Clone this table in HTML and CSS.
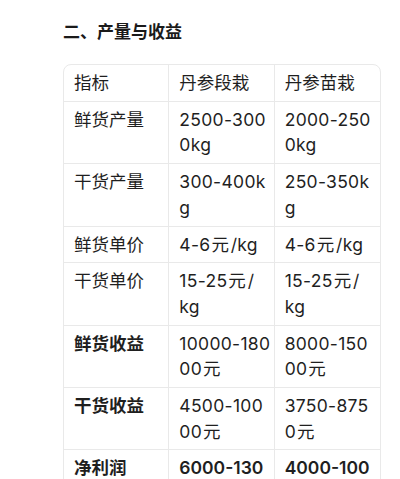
FILE: index.html
```html
<!DOCTYPE html>
<html lang="zh-CN">
<head>
<meta charset="utf-8">
<title>产量与收益</title>
<link rel="stylesheet" href="styles.css">
</head>
<body>
<section class="doc">
  <h2 class="title">二、产量与收益</h2>
  <table class="grid">
    <colgroup><col><col><col></colgroup>
    <thead>
      <tr><th>指标</th><th>丹参段栽</th><th>丹参苗栽</th></tr>
    </thead>
    <tbody>
      <tr><td>鲜货产量</td><td>2500-300<br>0kg</td><td>2000-250<br>0kg</td></tr>
      <tr><td>干货产量</td><td>300-400k<br>g</td><td>250-350k<br>g</td></tr>
      <tr><td>鲜货单价</td><td>4-6<span class="unit">元</span>/kg</td><td>4-6<span class="unit">元</span>/kg</td></tr>
      <tr><td>干货单价</td><td>15-25<span class="unit">元</span>/<br>kg</td><td>15-25<span class="unit">元</span>/<br>kg</td></tr>
      <tr><td class="strong">鲜货收益</td><td>10000-180<br>00<span class="unit">元</span></td><td>8000-150<br>00<span class="unit">元</span></td></tr>
      <tr><td class="strong">干货收益</td><td>4500-100<br>00<span class="unit">元</span></td><td>3750-875<br>0<span class="unit">元</span></td></tr>
      <tr><td class="strong">净利润</td><td class="strong">6000-130<br>00<span class="unit">元</span></td><td class="strong">4000-100<br>00<span class="unit">元</span></td></tr>
    </tbody>
  </table>
</section>
</body>
</html>
```
FILE: styles.css
```css
html, body {
  margin: 0;
  padding: 0;
  background: #ffffff;
}
body {
  font-family: Inter, "Noto Sans CJK SC", sans-serif;
  color: #1f1f1f;
}
.doc {
  padding: 20px 19px 0 63px;
}
.title {
  margin: 0 0 19px 0;
  font-size: 17px;
  line-height: 25px;
  font-weight: 700;
  color: #1a1a1a;
}
.grid {
  width: 318px;
  table-layout: fixed;
  border-collapse: separate;
  border-spacing: 0;
  border: 1px solid #e9e9e9;
  border-radius: 8px;
  overflow: hidden;
}
.grid th,
.grid td {
  padding: 5px 4px 5px 10px;
  font-size: 17.5px;
  line-height: 25.7px;
  font-weight: 400;
  text-align: left;
  vertical-align: top;
  white-space: nowrap;
  border-right: 1px solid #e9e9e9;
  border-bottom: 1px solid #e9e9e9;
}
.grid td + td {
  letter-spacing: 0.3px;
}
.grid td + td.strong {
  letter-spacing: 0;
}
.grid th:last-child,
.grid td:last-child {
  border-right: none;
}
.grid tbody tr:last-child td {
  border-bottom: none;
}
.grid .strong {
  font-weight: 600;
}
.unit {
  margin: 0 1.5px 0 1px;
}
```
